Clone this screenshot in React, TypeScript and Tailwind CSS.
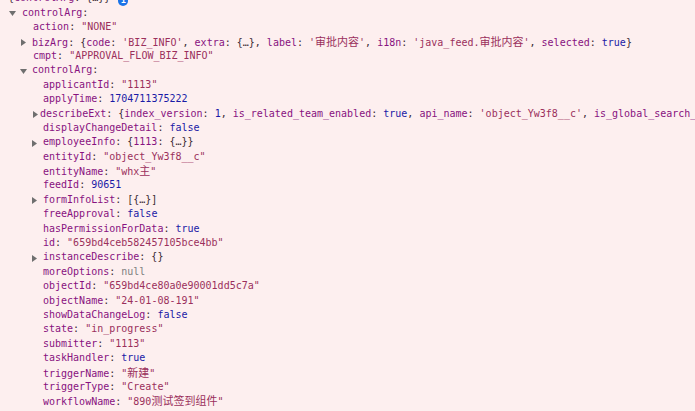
import React from "react";

const K = ({ children }: { children: React.ReactNode }) => <span className="text-[#881280]">{children}</span>;
const P = ({ children }: { children: React.ReactNode }) => <span className="text-[#3b2a33]">{children}</span>;
const S = ({ children }: { children: React.ReactNode }) => <span className="text-[#9b2f5c]">{children}</span>;
const N = ({ children }: { children: React.ReactNode }) => <span className="text-[#1a1aa6]">{children}</span>;
const Z = ({ children }: { children: React.ReactNode }) => <span className="text-[#808080]">{children}</span>;
const C = ({ children }: { children: React.ReactNode }) => (
  <span className="text-[11px] [font-family:'Noto_Sans_CJK_SC',sans-serif]">{children}</span>
);

const Down = () => (
  <svg width="7" height="5" viewBox="0 0 7 5" className="mt-[2px]">
    <polygon points="0,0 7,0 3.5,5" fill="#6f6f6f" />
  </svg>
);
const Right = () => (
  <svg width="5" height="7" viewBox="0 0 5 7" className="mt-[1px]">
    <polygon points="0,0 5,3.5 0,7" fill="#6f6f6f" />
  </svg>
);

type RowProps = { pad: string; arrow?: "down" | "right"; box?: string; children: React.ReactNode };
const Row = ({ pad, arrow, box, children }: RowProps) => (
  <div className={`flex items-center h-[14.4px] whitespace-nowrap ${pad}`}>
    {arrow && <span className={`flex items-center shrink-0 ${box}`}>{arrow === "down" ? <Down /> : <Right />}</span>}
    <span>{children}</span>
  </div>
);

const Leaf = ({ k, children }: { k: string; children: React.ReactNode }) => (
  <Row pad="pl-[43px]">
    <K>{k}</K>
    <P>: </P>
    {children}
  </Row>
);

export default function App() {
  return (
    <div className="w-[695px] h-[411px] overflow-hidden bg-[#fdefef] text-[10px] leading-[14.4px] [font-family:'DejaVu_Sans_Mono','Noto_Sans_CJK_SC',monospace]">
      <div className="-mt-[8.6px]">
        <div className="flex items-center h-[14.4px] whitespace-nowrap pl-[8px]">
          <P>{"{"}</P>
          <K>controlArg</K>
          <P>{": {…}}"}</P>
          <span className="ml-[8px] mt-[4px] shrink-0 w-[10px] h-[10px] rounded-full bg-[#1a73e8] text-white text-[8px] leading-[10px] text-center font-bold">
            i
          </span>
        </div>
        <Row pad="pl-[9px]" arrow="down" box="w-[13px]">
          <K>controlArg</K>
          <P>:</P>
        </Row>
        <Row pad="pl-[33px]">
          <K>action</K>
          <P>: </P>
          <S>"NONE"</S>
        </Row>
        <Row pad="pl-[21px]" arrow="right" box="w-[11px]">
          <K>bizArg</K>
          <P>{": {"}</P>
          <K>code</K>
          <P>: </P>
          <S>'BIZ_INFO'</S>
          <P>, </P>
          <K>extra</K>
          <P>{": {…}, "}</P>
          <K>label</K>
          <P>: </P>
          <S>
            '<C>审批内容</C>'
          </S>
          <P>, </P>
          <K>i18n</K>
          <P>: </P>
          <S>
            'java_feed.<C>审批内容</C>'
          </S>
          <P>, </P>
          <K>selected</K>
          <P>: </P>
          <N>true</N>
          <P>{"}"}</P>
        </Row>
        <Row pad="pl-[33px]">
          <K>cmpt</K>
          <P>: </P>
          <S>"APPROVAL_FLOW_BIZ_INFO"</S>
        </Row>
        <Row pad="pl-[20px]" arrow="down" box="w-[12px]">
          <K>controlArg</K>
          <P>:</P>
        </Row>
        <Leaf k="applicantId">
          <S>"1113"</S>
        </Leaf>
        <Leaf k="applyTime">
          <N>1704711375222</N>
        </Leaf>
        <Row pad="pl-[33px]" arrow="right" box="w-[7px]">
          <K>describeExt</K>
          <P>{": {"}</P>
          <K>index_version</K>
          <P>: </P>
          <N>1</N>
          <P>, </P>
          <K>is_related_team_enabled</K>
          <P>: </P>
          <N>true</N>
          <P>, </P>
          <K>api_name</K>
          <P>: </P>
          <S>'object_Yw3f8__c'</S>
          <P>, </P>
          <K>is_global_search_enabled</K>
          <P>: </P>
          <N>true</N>
        </Row>
        <Leaf k="displayChangeDetail">
          <N>false</N>
        </Leaf>
        <Row pad="pl-[32px]" arrow="right" box="w-[11px]">
          <K>employeeInfo</K>
          <P>{": {"}</P>
          <K>1113</K>
          <P>{": {…}}"}</P>
        </Row>
        <Leaf k="entityId">
          <S>"object_Yw3f8__c"</S>
        </Leaf>
        <Leaf k="entityName">
          <S>
            "whx<C>主</C>"
          </S>
        </Leaf>
        <Leaf k="feedId">
          <N>90651</N>
        </Leaf>
        <Row pad="pl-[32px]" arrow="right" box="w-[11px]">
          <K>formInfoList</K>
          <P>{": [{…}]"}</P>
        </Row>
        <Leaf k="freeApproval">
          <N>false</N>
        </Leaf>
        <Leaf k="hasPermissionForData">
          <N>true</N>
        </Leaf>
        <Leaf k="id">
          <S>"659bd4ceb582457105bce4bb"</S>
        </Leaf>
        <Row pad="pl-[32px]" arrow="right" box="w-[11px]">
          <K>instanceDescribe</K>
          <P>{": {}"}</P>
        </Row>
        <Leaf k="moreOptions">
          <Z>null</Z>
        </Leaf>
        <Leaf k="objectId">
          <S>"659bd4ce80a0e90001dd5c7a"</S>
        </Leaf>
        <Leaf k="objectName">
          <S>"24-01-08-191"</S>
        </Leaf>
        <Leaf k="showDataChangeLog">
          <N>false</N>
        </Leaf>
        <Leaf k="state">
          <S>"in_progress"</S>
        </Leaf>
        <Leaf k="submitter">
          <S>"1113"</S>
        </Leaf>
        <Leaf k="taskHandler">
          <N>true</N>
        </Leaf>
        <Leaf k="triggerName">
          <S>
            "<C>新建</C>"
          </S>
        </Leaf>
        <Leaf k="triggerType">
          <S>"Create"</S>
        </Leaf>
        <Leaf k="workflowName">
          <S>
            "890<C>测试签到组件</C>"
          </S>
        </Leaf>
      </div>
    </div>
  );
}
